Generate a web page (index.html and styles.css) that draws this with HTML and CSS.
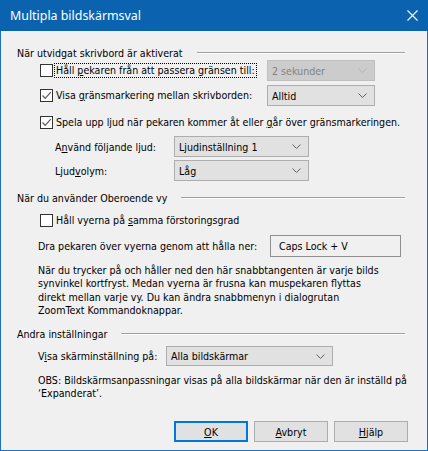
FILE: index.html
```html
<!DOCTYPE html>
<html lang="sv">
<head>
<meta charset="utf-8">
<title>Multipla bildskärmsval</title>
<link rel="stylesheet" href="styles.css">
</head>
<body>
<div class="window">
  <div class="titlebar">
    <span class="title">Multipla bildskärmsval</span>
    <svg class="close" width="11" height="11" viewBox="0 0 11 11"><path d="M0.5 0.5 L10.5 10.5 M10.5 0.5 L0.5 10.5" stroke="#fff" stroke-width="1.1" fill="none"/></svg>
  </div>
  <div class="content">
    <div class="ghead g1"><span>När utvidgat skrivbord är aktiverat</span><div class="rule"></div></div>

    <div class="row r1 ind-cb">
      <div class="cbwrap w-cb1"><span class="cb"></span><span class="label focus">Håll <u>p</u>ekaren från att passera gränsen till:</span></div>
      <div class="select disabled s-small"><span>2 sekunder</span><svg class="chev" width="9" height="5" viewBox="0 0 9 5"><path d="M0.5 0.5 L4.5 4.5 L8.5 0.5" fill="none" stroke="currentColor"/></svg></div>
    </div>

    <div class="row r2 ind-cb">
      <div class="cbwrap w-cb1"><span class="cb checked"><svg width="11" height="11" viewBox="0 0 11 11"><path d="M1.5 5.5 L4.2 8.3 L9.8 2.2" fill="none" stroke="#5a5a5a" stroke-width="1.2"/></svg></span><span class="label">Visa <u>g</u>ränsmarkering mellan skrivborden:</span></div>
      <div class="select s-small"><span>Alltid</span><svg class="chev" width="9" height="5" viewBox="0 0 9 5"><path d="M0.5 0.5 L4.5 4.5 L8.5 0.5" fill="none" stroke="currentColor"/></svg></div>
    </div>

    <div class="row r3 ind-cb">
      <div class="cbwrap"><span class="cb checked"><svg width="11" height="11" viewBox="0 0 11 11"><path d="M1.5 5.5 L4.2 8.3 L9.8 2.2" fill="none" stroke="#5a5a5a" stroke-width="1.2"/></svg></span><span class="label">Spela upp ljud när pekaren kommer åt eller <u>g</u>år över gränsmarkeringen.</span></div>
    </div>

    <div class="row r4 ind-sub">
      <span class="sublabel">A<u>n</u>vänd följande ljud:</span>
      <div class="select s-sound"><span>Ljudinställning 1</span><svg class="chev" width="9" height="5" viewBox="0 0 9 5"><path d="M0.5 0.5 L4.5 4.5 L8.5 0.5" fill="none" stroke="currentColor"/></svg></div>
    </div>

    <div class="row r5 ind-sub">
      <span class="sublabel">Ljud<u>v</u>olym:</span>
      <div class="select s-sound"><span>Låg</span><svg class="chev" width="9" height="5" viewBox="0 0 9 5"><path d="M0.5 0.5 L4.5 4.5 L8.5 0.5" fill="none" stroke="currentColor"/></svg></div>
    </div>

    <div class="ghead g2"><span>När du använder Oberoende vy</span><div class="rule"></div></div>

    <div class="row r6 ind-cb">
      <div class="cbwrap"><span class="cb"></span><span class="label">Håll vyerna på <u>s</u>amma förstoringsgrad</span></div>
    </div>

    <div class="row r7 ind-p">
      <span class="tblabel">Dra pekaren över vyerna genom att hålla ner:</span>
      <div class="textbox">Caps Lock + V</div>
    </div>

    <p class="para ind-p">När du trycker på och håller ned den här snabbtangenten är varje bilds<br>synvinkel kortfryst. Medan vyerna är frusna kan muspekaren flyttas<br>direkt mellan varje vy. Du kan ändra snabbmenyn i dialogrutan<br>ZoomText Kommandoknappar.</p>

    <div class="ghead g3"><span>Andra inställningar</span><div class="rule"></div></div>

    <div class="row r8 ind-p">
      <span class="dlabel">V<u>i</u>sa skärminställning på:</span>
      <div class="select s-disp"><span>Alla bildskärmar</span><svg class="chev" width="9" height="5" viewBox="0 0 9 5"><path d="M0.5 0.5 L4.5 4.5 L8.5 0.5" fill="none" stroke="currentColor"/></svg></div>
    </div>

    <p class="obs ind-p">OBS: Bildskärmsanpassningar visas på alla bildskärmar när den är inställd på<br>‘Expanderat’.</p>

    <div class="buttons">
      <button class="btn default"><u>O</u>K</button>
      <button class="btn"><u>A</u>vbryt</button>
      <button class="btn"><u>H</u>jälp</button>
    </div>
  </div>
</div>
</body>
</html>
```

FILE: styles.css
```css
* { box-sizing: border-box; }
html, body { margin: 0; padding: 0; background: #ffffff; }
body {
  font-family: "DejaVu Sans Condensed", "Liberation Sans", sans-serif;
  font-size: 10.6px;
  color: #000;
}
.window {
  width: 428px;
  height: 451px;
  border: 1px solid #1a72c2;
  border-top: none;
  background: #f0f0f0;
  display: flex;
  flex-direction: column;
}
.titlebar {
  height: 31px;
  flex: none;
  background: #0b63b0;
  color: #fff;
  display: flex;
  align-items: center;
  justify-content: space-between;
  padding: 0 10px 0 9px;
  margin: 0 -1px;
}
.title {
  font-family: "Noto Sans", "Open Sans", sans-serif;
  font-size: 12.4px;
  padding-left: 1px;
}
.close { display: block; margin-top: 0; }

.content {
  flex: 1;
  display: flex;
  flex-direction: column;
  padding: 0 22px 0 16px;
}
.ghead {
  display: flex;
  align-items: center;
  height: 16px;
  white-space: nowrap;
}
.rule {
  flex: 1;
  height: 2px;
  border-top: 1px solid #a0a0a0;
  border-bottom: 1px solid #ffffff;
  margin-left: 14px;
}
.g1 { margin-top: 14px; }
.g2 { margin-top: 9px; }
.g3 { margin-top: 9px; }

.row { display: flex; align-items: center; white-space: nowrap; }
.ind-cb { padding-left: 23px; }
.ind-sub { padding-left: 38px; }
.ind-p { padding-left: 21px; }

.r1 { height: 21px; margin-top: -1px; }
.r2 { height: 21px; margin-top: 4px; }
.r3 { height: 20px; margin-top: 6px; }
.r4 { height: 21px; margin-top: 4px; }
.r5 { height: 21px; margin-top: 3px; }
.r6 { height: 16px; margin-top: 6px; }
.r7 { height: 22px; margin-top: 7px; }
.r8 { height: 20px; margin-top: 4px; }

.cbwrap { display: flex; align-items: center; }
.w-cb1 { width: 227px; flex: none; }
.cb {
  width: 13px;
  height: 13px;
  flex: none;
  border: 1px solid #333333;
  background: #ffffff;
  margin-right: 1px;
  display: flex;
  align-items: center;
  justify-content: center;
}
.cb svg { display: block; }
.label { border: 1px solid transparent; padding: 0 1px 0 1px; line-height: 13px; }
.label.focus { border: 1px dotted #000; }

.sublabel { width: 119px; flex: none; }
.tblabel { width: 232px; flex: none; }
.dlabel { width: 128px; flex: none; }

.select {
  height: 21px;
  border: 1px solid #adadad;
  background: #e1e1e1;
  display: flex;
  align-items: center;
  justify-content: space-between;
  padding: 0 7px 0 4px;
  color: #000;
}
.select .chev { color: #606060; display: block; }
.select.disabled { background: #cccccc; border-color: #bfbfbf; color: #838383; }
.select.disabled .chev { color: #b5b5b5; }
.s-small { width: 108px; }
.s-sound { width: 135px; }
.s-disp { width: 167px; height: 20px; }

.textbox {
  width: 131px;
  height: 22px;
  border: 1px solid #8f8f8f;
  background: #f0f0f0;
  padding: 0 8px;
  display: flex;
  align-items: center;
}

.para {
  margin: 7px 0 0 0;
  line-height: 13.3px;
  white-space: nowrap;
}
.obs {
  margin: 8px 0 0 0;
  line-height: 13px;
  white-space: nowrap;
}

.buttons {
  display: flex;
  justify-content: flex-end;
  gap: 6px;
  margin-top: 21px;
  margin-right: -3px;
}
.btn {
  width: 74px;
  height: 21px;
  border: 1px solid #adadad;
  background: #e1e1e1;
  font-family: inherit;
  font-size: 10.6px;
  color: #000;
  padding: 0;
}
.btn.default { border: 2px solid #0078d7; }
u { text-decoration: underline; text-underline-offset: 1px; }
```
